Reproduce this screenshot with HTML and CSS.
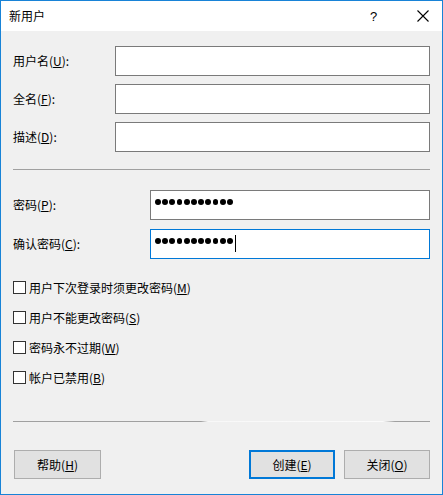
FILE: index.html
```html
<!DOCTYPE html>
<html lang="zh-CN">
<head>
<meta charset="utf-8">
<title>新用户</title>
<link rel="stylesheet" href="styles.css">
</head>
<body>
<div class="window">
  <div class="titlebar">
    <span class="title">新用户</span>
    <span class="help">?</span>
    <span class="close">
      <svg width="12" height="12" viewBox="0 0 12 12"><path d="M0.5 0.5 L11.5 11.5 M11.5 0.5 L0.5 11.5" stroke="#000" stroke-width="1.1" fill="none"/></svg>
    </span>
  </div>
  <div class="content">
    <div class="fields">
      <div class="row">
        <label class="label">用户名(<u>U</u>):</label>
        <div class="box wide"></div>
      </div>
      <div class="row">
        <label class="label">全名(<u>F</u>):</label>
        <div class="box wide"></div>
      </div>
      <div class="row">
        <label class="label">描述(<u>D</u>):</label>
        <div class="box wide"></div>
      </div>
    </div>
    <div class="sep sep1"></div>
    <div class="pwfields">
      <div class="row">
        <label class="label">密码(<u>P</u>):</label>
        <div class="box narrow">
          <div class="dots"><i></i><i></i><i></i><i></i><i></i><i></i><i></i><i></i><i></i><i></i><i></i></div>
        </div>
      </div>
      <div class="row">
        <label class="label">确认密码(<u>C</u>):</label>
        <div class="box narrow focused">
          <div class="dots"><i></i><i></i><i></i><i></i><i></i><i></i><i></i><i></i><i></i><i></i><i></i><b class="caret"></b></div>
        </div>
      </div>
    </div>
    <div class="checks">
      <div class="check"><span class="cb"></span><span>用户下次登录时须更改密码(<u>M</u>)</span></div>
      <div class="check"><span class="cb"></span><span>用户不能更改密码(<u>S</u>)</span></div>
      <div class="check"><span class="cb"></span><span>密码永不过期(<u>W</u>)</span></div>
      <div class="check"><span class="cb"></span><span>帐户已禁用(<u>B</u>)</span></div>
    </div>
    <div class="sep sep2"></div>
    <div class="buttons">
      <div class="btn help-btn">帮助(<u>H</u>)</div>
      <div class="spacer"></div>
      <div class="btn default">创建(<u>E</u>)</div>
      <div class="btn">关闭(<u>O</u>)</div>
    </div>
  </div>
</div>
</body>
</html>
```

FILE: styles.css
```css
* { box-sizing: border-box; }
html, body { margin: 0; padding: 0; background: #f0f0f0; }
body {
  font-family: "Noto Sans CJK SC", "Microsoft YaHei", sans-serif;
  font-size: 12px;
  color: #000;
}
u { text-decoration: underline; text-underline-offset: 1px; }

.window {
  width: 443px;
  height: 495px;
  border: 1px solid #1883d7;
  background: #f0f0f0;
  display: flex;
  flex-direction: column;
}

.titlebar {
  height: 30px;
  background: #fff;
  display: flex;
  align-items: center;
  padding-left: 8px;
  flex: none;
}
.title { font-size: 12px; flex: 1; line-height: 16px; }
.help { width: 44px; text-align: left; font-size: 13px; font-family: "Liberation Sans", sans-serif; padding-left: 0; }
.close { width: 28px; display: flex; align-items: center; padding-left: 3px; height: 30px; }

.content {
  padding: 15px 12px 0 12px;
  flex: 1;
  display: flex;
  flex-direction: column;
}

.fields, .pwfields {
  display: flex;
  flex-direction: column;
  gap: 8px;
}
.pwfields { gap: 9px; margin-top: 20px; }

.row {
  display: flex;
  align-items: center;
  height: 30px;
}
.label { flex: 1; line-height: 16px; }

.box {
  height: 30px;
  background: #fff;
  border: 1px solid #7a7a7a;
  display: flex;
  align-items: center;
}
.wide { width: 315px; }
.narrow { width: 280px; }
.focused { border-color: #0078d7; }

.dots {
  display: flex;
  align-items: center;
  gap: 1.3px;
  padding-left: 4px;
  margin-top: -6px;
  position: relative;
}
.dots i {
  display: block;
  width: 5.9px;
  height: 5.9px;
  border-radius: 50%;
  background: #000;
}
.caret {
  display: block;
  width: 1px;
  height: 17px;
  background: #000;
  margin-left: 1px;
  margin-top: 4px;
}

.sep { height: 1px; background: #a0a0a0; flex: none; }
.sep1 { margin-top: 17px; }
.sep2 {
  margin-top: 37px;
  background: linear-gradient(to right, #a0a0a0 0, #a0a0a0 188px, #f8f8f8 195px, #fbfbfb 370px, #a0a0a0 382px, #a0a0a0 100%);
}

.checks {
  display: flex;
  flex-direction: column;
  gap: 17px;
  margin-top: 22px;
}
.check {
  display: flex;
  align-items: center;
  height: 13px;
  gap: 3px;
  line-height: 16px;
}
.cb {
  width: 13px;
  height: 13px;
  border: 1px solid #333;
  background: #fff;
  flex: none;
}

.buttons {
  display: flex;
  margin-top: 28px;
  gap: 9px;
}
.spacer { flex: 1; }
.btn {
  width: 86px;
  height: 29px;
  background: #e1e1e1;
  border: 1px solid #adadad;
  display: flex;
  align-items: center;
  justify-content: center;
  line-height: 16px;
}
.help-btn { margin-left: 1px; width: 87px; }
.default { border: 2px solid #0078d7; }
```
